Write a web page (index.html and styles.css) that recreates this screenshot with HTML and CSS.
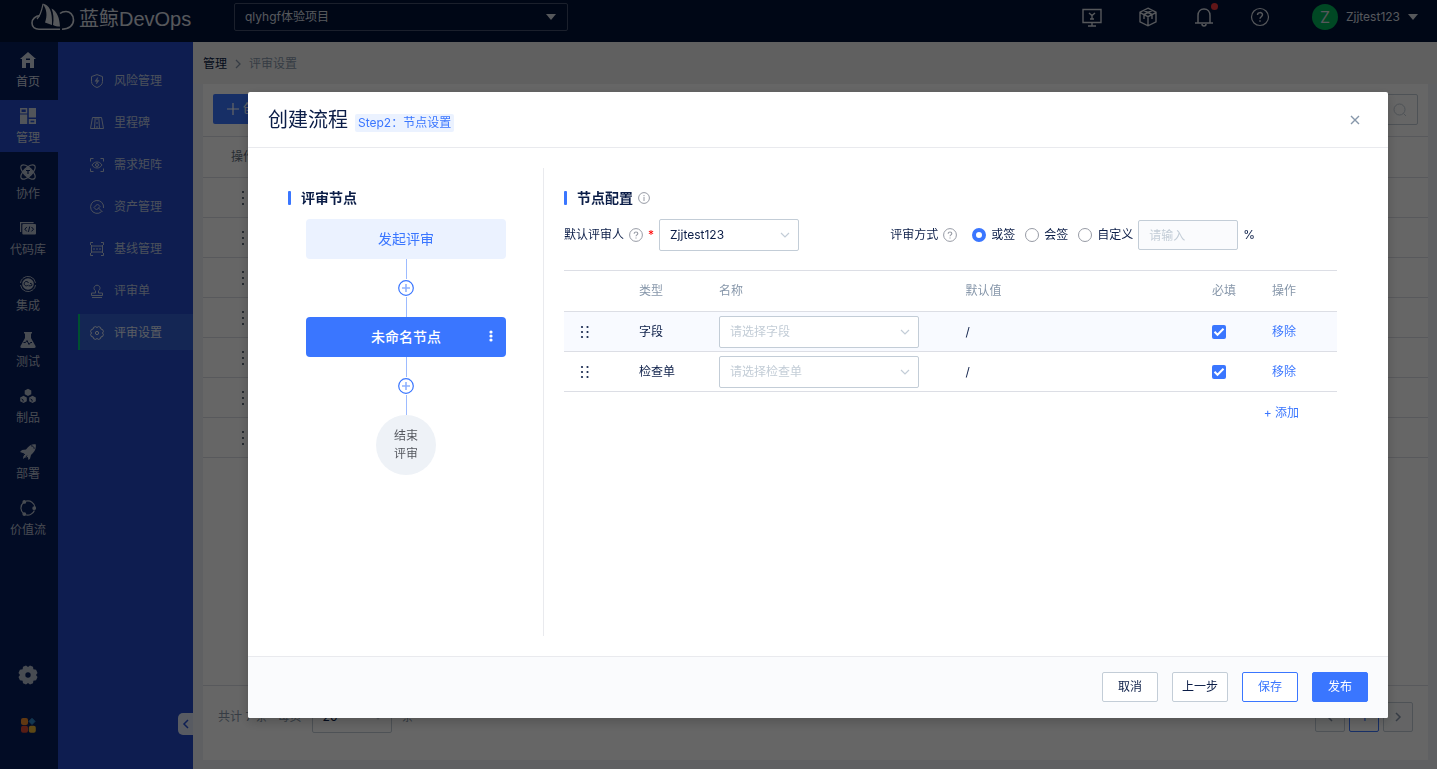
FILE: index.html
```html
<!DOCTYPE html>
<html lang="zh-CN">
<head>
<meta charset="utf-8">
<meta name="viewport" content="width=device-width, initial-scale=1">
<title>蓝鲸DevOps - 评审设置</title>
<link rel="stylesheet" href="styles.css">
</head>
<body>
<svg class="sprite" aria-hidden="true">
  <symbol id="chevron-down" viewBox="0 0 12 12"><path d="M2 4l4 4 4-4" fill="none" stroke="currentColor" stroke-width="1.2"/></symbol>
  <symbol id="help" viewBox="0 0 14 14"><circle cx="7" cy="7" r="6.4" fill="none" stroke="currentColor"/><path d="M5.2 5.7C5.2 3.3 8.8 3.4 8.8 5.6 8.8 6.9 7 6.8 7 8.3M7 9.4v1.2" fill="none" stroke="currentColor" stroke-width="1.1"/></symbol>
  <symbol id="plus-circle" viewBox="0 0 16 16"><circle cx="8" cy="8" r="7.3" fill="#fff" stroke="#3a76ff" stroke-width="1.2"/><path d="M8 4v8M4 8h8" stroke="#8fb2ff" stroke-width="1.6"/></symbol>
  <symbol id="drag" viewBox="0 0 10 14"><g fill="#14264d"><circle cx="2" cy="2" r="1.1"/><circle cx="7.500" cy="2" r="1.100"/><circle cx="2" cy="7" r="1.100"/><circle cx="7.500" cy="7" r="1.100"/><circle cx="2" cy="12" r="1.100"/><circle cx="7.500" cy="12" r="1.100"/></g></symbol>
  <symbol id="dots" viewBox="0 0 4 16"><path d="M1 1h2v2H1zM1 7h2v2H1zM1 13h2v2H1z" fill="currentColor"/></symbol>
</svg>

<header class="topbar">
  <a class="brand" href="#">
    <svg class="brand-mark" viewBox="0 0 44 30" aria-hidden="true">
      <path d="M9 13.500C4.500 14 1 17 1 21c0 4 3 6.200 7 6.200h21M31 27.200c7 0 11.500-3.800 11.500-9.200 0-5.500-4-8.500-7.500-8.500-2.500 0-4.500.7-6 2" fill="none" stroke="currentColor" stroke-width="1.600"/>
      <path d="M12 2c-1 5-2 11-6 15" fill="none" stroke="currentColor" stroke-width="1.200"/>
      <path d="M11.500 1.500c7 1 10 8 9.500 21.500l-7-2.500C16.500 14 16 7 11.500 1.500zM20.500 6.500c6 3 8 10 8.500 18-3 0-5-.5-7-1.500 1-6 .5-12-1.500-16.500z" fill="currentColor"/>
    </svg>
    <span class="brand-name">蓝鲸DevOps</span>
  </a>
  <div class="project">
    <select aria-label="项目"><option>qlyhgf体验项目</option></select>
    <svg viewBox="0 0 10 6" aria-hidden="true"><path d="M0 0h10L5 6z" fill="currentColor"/></svg>
  </div>
  <nav class="tools" aria-label="工具">
    <button type="button" aria-label="控制台"><svg viewBox="0 0 20 20"><path d="M1 2.500h18v13H1zM10 15.500V19M6 19h8M7 6l3 2.500L13 6M10 8.500V12M8 12h4" fill="none" stroke="currentColor" stroke-width="1.400"/></svg></button>
    <button type="button" aria-label="产品"><svg viewBox="0 0 20 20"><path d="M10 1.200l8 4v9.600l-8 4-8-4V5.200zM2 5.700l8 4 8-4M10 9.700v9M6 3.500l8 4M14 3.500l-8 4M6 7.500v4.500M14 7.500v4.500" fill="none" stroke="currentColor" stroke-width="1.400"/></svg></button>
    <button type="button" class="bell" aria-label="通知"><svg viewBox="0 0 20 20"><path d="M1 16h18M4 16V8.500C4 4.500 6.500 2 10 2s6 2.500 6 6.500V16M8 17c0 2.600 4 2.600 4 0" fill="none" stroke="currentColor" stroke-width="1.500"/></svg></button>
    <button type="button" aria-label="帮助"><svg viewBox="0 0 20 20"><circle cx="10" cy="10" r="8.500" fill="none" stroke="currentColor" stroke-width="1.200"/><path d="M7.500 8c0-3.200 5-3.200 5-.2 0 1.800-2.500 2-2.500 4M10 13.200v1.500" fill="none" stroke="currentColor" stroke-width="1.400"/></svg></button>
    <button type="button" class="user"><span class="avatar">Z</span><span>Zjjtest123</span><svg viewBox="0 0 10 6"><path d="M0 0h10L5 6z" fill="currentColor"/></svg></button>
  </nav>
</header>

<div class="shell">
  <nav class="rail" aria-label="主导航">
    <a href="#"><svg viewBox="0 0 16 16"><path d="M8 0l8 7h-2v9H10v-5H6v5H2V7H0zM6 8h4V6.500H6z" fill="currentColor"/></svg>首页</a>
    <a href="#" class="active" aria-current="page"><svg viewBox="0 0 16 16"><path d="M8.800 0H16v9.500H8.800zM0 6.500h7.200V16H0zM8.800 11H16v5H8.800z" fill="currentColor"/><path d="M.8.8h5.700v3.900H.8z" fill="none" stroke="currentColor" stroke-width="1.500"/><path d="M10.500 12.700h3.800v1.600h-3.800z" fill="#234ed2"/></svg>管理</a>
    <a href="#"><svg viewBox="0 0 16 16"><g fill="none" stroke="currentColor" stroke-width="1.200"><ellipse cx="8" cy="8" rx="9.200" ry="4.200" transform="rotate(45 8 8)"/><ellipse cx="8" cy="8" rx="9.200" ry="4.200" transform="rotate(-45 8 8)"/></g><path d="M8 2.500L13.500 8 8 13.500 2.500 8z" fill="currentColor"/><path d="M6 6.500h4M8 6.500V10" stroke="#051e5c" stroke-width="1.200"/></svg>协作</a>
    <a href="#"><svg viewBox="0 0 16 16"><path d="M.6 12V2.600h13" fill="none" stroke="currentColor" stroke-width="1.200"/><rect x="2.300" y="4" width="13.700" height="10.500" rx="1" fill="currentColor"/><path d="M6.800 7L4.800 9.200l2 2.200M11.500 7l2 2.200-2 2.200M9.700 6.500l-1.200 5.400" fill="none" stroke="#051e5c"/></svg>代码库</a>
    <a href="#"><svg viewBox="0 0 16 16"><circle cx="8" cy="8" r="5.800" fill="currentColor"/><path d="M3 2.200A7.600 7.600 0 0 1 15.500 7M13 13.800A7.600 7.600 0 0 1 .5 9M2.600 2.600A7.500 7.500 0 0 0 .5 7M13.400 13.400A7.500 7.500 0 0 0 15.500 9" fill="none" stroke="currentColor" stroke-width=".9"/><path d="M8.300 8.800a2.200 2.200 0 1 1 .2-1.800M8.500 9.800h2.200a1.200 1.200 0 1 0-.7-2.200" fill="none" stroke="#051e5c"/></svg>集成</a>
    <a href="#"><svg viewBox="0 0 16 16"><path d="M4 0h8v1.500h-1V6l4.500 8c.5 1-.2 2-1.200 2H1.700c-1 0-1.700-1-1.200-2L5 6V1.500H4z" fill="currentColor"/><path d="M3.500 10.500h2l1.500-2 2 4 1.500-2H12" fill="none" stroke="#051e5c"/></svg>测试</a>
    <a href="#"><svg viewBox="0 0 16 16"><path d="M8 .8l3.300 1.800v3.600L8 8 4.700 6.200V2.600zM3.500 7.800l3.300 1.800v3.600l-3.300 1.900L.2 13.200V9.600zM12.500 7.800l3.300 1.800v3.600l-3.300 1.900-3.300-1.900V9.600z" fill="currentColor"/><path d="M1.500 11l1.600.9v1.700M10.500 11l1.600.9v1.700" fill="none" stroke="#051e5c" stroke-width=".9"/></svg>制品</a>
    <a href="#"><svg viewBox="0 0 16 16"><path d="M15.700.3C16.500 5 14.500 8 11 11l-1 3.800L8.500 16 7.800 13 5 13.500 3 15l.5-3.500.7-2L0 8l2-2 4-.6C9 1.500 12-.3 15.700.3z" fill="currentColor"/><path d="M11 1.800c2 0 3 1.200 3.200 3M3 12l2-2M6 13l1-1.500" fill="none" stroke="#051e5c" stroke-width=".9"/></svg>部署</a>
    <a href="#"><svg viewBox="0 0 16 16"><path d="M6 1.200A7.200 7.200 0 0 1 15 7.500M14.400 10.500A7 7 0 0 1 5 14.500M3.500 13.500A7.200 7.200 0 0 1 3.500 2.500" fill="none" stroke="currentColor" stroke-width="1.200"/><g fill="currentColor"><circle cx="4.300" cy="1.900" r="1.900"/><circle cx="14.200" cy="8.200" r="1.900"/><circle cx="4.300" cy="14.100" r="1.900"/></g></svg>价值流</a>
    <div class="rail-foot">
      <button type="button" aria-label="设置"><svg viewBox="0 0 20 20"><path d="M8 .5L10 2l2-1.500 3 1.200.4 2.600 2.700.5L19.500 8 18 10l1.500 2-1.400 3.200-2.700.5-.4 2.600-3 1.200-2-1.500-2 1.500-3-1.200-.4-2.600-2.700-.5L.5 12 2 10 .5 8l1.400-3.200 2.700-.5L5 1.700z" fill="currentColor"/><circle cx="10" cy="10" r="2.700" fill="#051e5c"/></svg></button>
      <button type="button" aria-label="应用"><svg class="apps" viewBox="0 0 16 16"><rect x="1" y="1" width="7" height="7" rx="2" fill="#f08c2e"/><path d="M12 1.300L15 4.400 12 7.500 9 4.400z" fill="#2f87c8" stroke="#2f87c8" stroke-linejoin="round"/><rect x="1" y="8.800" width="7" height="7" rx="2" fill="#d94a35"/><rect x="8.800" y="8.800" width="7" height="7" rx="2" fill="#e9b436"/></svg></button>
    </div>
  </nav>

  <nav class="subnav" aria-label="管理">
    <a href="#"><svg viewBox="0 0 14 14"><path d="M7 .6l5.500 2v4.900c0 3-2.500 5-5.500 6-3-1-5.500-3-5.500-6V2.600z"/><path d="M7.700 3.500L5 7.300h2L6.300 10 9 6.500H7z" fill="currentColor" stroke-width=".5"/></svg>风险管理</a>
    <a href="#"><svg viewBox="0 0 14 14"><path d="M2.500 1.500h9l2 11H.5zM5.200 1.500l-.7 11M8.800 1.500l.7 11M7 1.500v2.500M7 6v2M7 10v2.500"/></svg>里程碑</a>
    <a href="#"><svg viewBox="0 0 14 14"><path d="M.5 3.500v-3h3M10.500.5h3v3M13.500 10.500v3h-3M3.500 13.500h-3v-3M2 7c2.500-4 7.500-4 10 0-2.500 4-7.500 4-10 0z"/><circle cx="7" cy="7" r="1.500"/></svg>需求矩阵</a>
    <a href="#"><svg viewBox="0 0 14 14"><path d="M11.500 11.700A6.500 6.500 0 1 1 13.500 8M4 7.500L7.500 4 10 6.500 6.500 10zM8.500 8l4 4"/></svg>资产管理</a>
    <a href="#"><svg viewBox="0 0 14 14"><path d="M.5 3V.5H3M11 .5h2.500V3M.5 11v2.500H3M11 13.500h2.500V11M1.500 3v8M12.500 3v8M1.500 4h11M1.500 10h11M3 7h2M6 7h2M9 7h2"/></svg>基线管理</a>
    <a href="#"><svg viewBox="0 0 14 14"><path d="M5.500 9V6.800a3 3 0 1 1 3 0V9h4v2.500h-11V9zM2 13.500h10"/></svg>评审单</a>
    <a href="#" class="active" aria-current="page"><svg viewBox="0 0 14 14"><path d="M5.500.6L7 1.500 8.500.6l2 .8.400 1.700 1.700.4.800 2L12.500 7l.9 1.500-.8 2-1.700.4-.4 1.700-2 .8-1.500-.9-1.500.9-2-.8-.4-1.700-1.700-.4-.8-2L1.500 7 .6 5.500l.8-2 1.700-.4.400-1.700z"/><circle cx="7" cy="7" r="1.600"/></svg>评审设置</a>
    <button type="button" class="collapse" aria-label="收起"><svg viewBox="0 0 8 10"><path d="M6 1L2 5l4 4" fill="none" stroke="#234ed2" stroke-width="1.500"/></svg></button>
  </nav>

  <main class="content">
    <nav class="crumbs" aria-label="面包屑"><a href="#">管理</a><svg viewBox="0 0 8 10"><path d="M2 1l4 4-4 4" fill="none" stroke="currentColor" stroke-width="1.300"/></svg><span>评审设置</span></nav>
    <section class="card">
      <div class="toolbar">
        <button type="button" class="create"><svg viewBox="0 0 12 12"><path d="M6 0v12M0 6h12" stroke="currentColor" stroke-width="1.200"/></svg>创建</button>
        <div class="search"><input type="text" aria-label="搜索"><svg viewBox="0 0 14 14"><circle cx="6.500" cy="6.500" r="5.500" fill="none" stroke="currentColor"/><path d="M10.500 10.500L13 13" stroke="currentColor"/></svg></div>
      </div>
      <table class="flows">
        <thead><tr><th>操作</th></tr></thead>
        <tbody>
          <tr><td><svg><use href="#dots"/></svg></td></tr>
          <tr><td><svg><use href="#dots"/></svg></td></tr>
          <tr><td><svg><use href="#dots"/></svg></td></tr>
          <tr><td><svg><use href="#dots"/></svg></td></tr>
          <tr><td><svg><use href="#dots"/></svg></td></tr>
          <tr><td><svg><use href="#dots"/></svg></td></tr>
          <tr><td><svg><use href="#dots"/></svg></td></tr>
        </tbody>
      </table>
      <div class="pager">
        <span>共计 7 条</span>
        <label for="page-size">每页</label>
        <div class="select size"><select id="page-size"><option>20</option></select><svg><use href="#chevron-down"/></svg></div>
        <span>条</span>
        <div class="pages">
          <button type="button" aria-label="上一页"><svg viewBox="0 0 8 10"><path d="M6 1L2 5l4 4" fill="none" stroke="currentColor" stroke-width="1.500"/></svg></button>
          <button type="button" class="current">1</button>
          <button type="button" aria-label="下一页"><svg viewBox="0 0 8 10"><path d="M2 1l4 4-4 4" fill="none" stroke="currentColor" stroke-width="1.500"/></svg></button>
        </div>
      </div>
    </section>
  </main>
</div>

<div class="overlay">
  <div class="dialog" role="dialog" aria-modal="true" aria-labelledby="dialog-title">
    <header class="dialog-head">
      <h1 id="dialog-title">创建流程</h1>
      <span class="step">Step2：节点设置</span>
      <button type="button" class="close" aria-label="关闭"><svg viewBox="0 0 12 12"><path d="M2 2l8 8M10 2l-8 8" stroke="currentColor" stroke-width="1.400"/></svg></button>
    </header>
    <div class="dialog-body">
      <section class="nodes">
        <h2>评审节点</h2>
        <div class="flow">
          <button type="button" class="node start">发起评审</button>
          <span class="link"></span>
          <button type="button" class="insert" aria-label="插入节点"><svg><use href="#plus-circle"/></svg></button>
          <span class="link"></span>
          <div class="node current"><span>未命名节点</span><button type="button" aria-label="更多"><svg viewBox="0 0 4 12"><g fill="#fff"><circle cx="2" cy="2" r="1.600"/><circle cx="2" cy="6" r="1.600"/><circle cx="2" cy="10" r="1.600"/></g></svg></button></div>
          <span class="link"></span>
          <button type="button" class="insert" aria-label="插入节点"><svg><use href="#plus-circle"/></svg></button>
          <span class="link"></span>
          <div class="end"><span>结束</span><span>评审</span></div>
        </div>
      </section>
      <section class="config">
        <h2>节点配置<svg viewBox="0 0 12 12"><circle cx="6" cy="6" r="5.400" fill="none" stroke="#979ba5"/><path d="M6 3v1.200M6 5v4" stroke="#979ba5"/></svg></h2>
        <form class="form">
          <div class="reviewer">
            <label for="reviewer">默认评审人</label>
            <svg class="hint"><use href="#help"/></svg>
            <span class="required">*</span>
            <div class="select"><select id="reviewer"><option>Zjjtest123</option></select><svg><use href="#chevron-down"/></svg></div>
          </div>
          <div class="mode" role="radiogroup" aria-labelledby="mode-label">
            <span id="mode-label">评审方式</span>
            <svg class="hint"><use href="#help"/></svg>
            <div class="radios">
              <label><input type="radio" name="mode" checked>或签</label>
              <label><input type="radio" name="mode">会签</label>
              <label><input type="radio" name="mode">自定义</label>
            </div>
            <input class="percent" type="text" placeholder="请输入" aria-label="自定义百分比" disabled>
            <span>%</span>
          </div>
        </form>
        <table class="fields">
          <colgroup><col class="c-drag"><col class="c-type"><col><col><col class="c-need"><col class="c-op"></colgroup>
          <thead><tr><th></th><th>类型</th><th>名称</th><th>默认值</th><th>必填</th><th>操作</th></tr></thead>
          <tbody>
            <tr class="hover"><td class="drag"><svg><use href="#drag"/></svg></td><td>字段</td><td><div class="select empty"><select aria-label="字段名称"><option>请选择字段</option></select><svg><use href="#chevron-down"/></svg></div></td><td>/</td><td><input type="checkbox" aria-label="字段必填" checked></td><td><a href="#">移除</a></td></tr>
            <tr><td class="drag"><svg><use href="#drag"/></svg></td><td>检查单</td><td><div class="select empty"><select aria-label="检查单名称"><option>请选择检查单</option></select><svg><use href="#chevron-down"/></svg></div></td><td>/</td><td><input type="checkbox" aria-label="检查单必填" checked></td><td><a href="#">移除</a></td></tr>
          </tbody>
        </table>
        <button type="button" class="add">+ 添加</button>
      </section>
    </div>
    <footer class="dialog-foot">
      <button type="button">取消</button>
      <button type="button">上一步</button>
      <button type="button" class="outline">保存</button>
      <button type="button" class="primary">发布</button>
    </footer>
  </div>
</div>
</body>
</html>
```

FILE: styles.css
```css
* { box-sizing: border-box; }
html, body { height: 100%; }
body {
  margin: 0;
  display: flex;
  flex-direction: column;
  overflow: hidden;
  font: 12px/18px Inter, "Noto Sans CJK SC", sans-serif;
  color: #0b1d47;
}
button, input, select { font: inherit; color: inherit; margin: 0; }
button { padding: 0; border: 0; background: none; cursor: pointer; }
a { color: inherit; text-decoration: none; }
svg { flex: none; display: block; }
table { border-collapse: collapse; width: 100%; table-layout: fixed; }
th { font-weight: 400; text-align: left; }
th, td { padding: 0; }
select { appearance: none; border: 0; background: none; width: 100%; height: 100%; outline: 0; }
.sprite { display: none; }

/* Top bar */
.topbar {
  flex: none;
  height: 42px;
  padding: 0 19px 8px 31px;
  display: flex;
  align-items: center;
  background: #021338;
  color: #d6dbe4;
}
.brand { display: flex; align-items: center; gap: 4px; width: 203px; }
.brand-mark { width: 44px; height: 30px; }
.brand-name { padding-top: 4px; font: 20px/30px "Liberation Sans", "Noto Sans CJK SC", sans-serif; white-space: nowrap; }
.project { position: relative; width: 334px; height: 28px; border: 1px solid #44516e; border-radius: 2px; }
.project select { padding: 0 10px; }
.project svg { position: absolute; right: 11px; top: 10px; width: 10px; height: 6px; pointer-events: none; }
.tools { margin-left: auto; display: flex; align-items: center; gap: 36px; }
.tools > button > svg { width: 20px; height: 20px; }
.bell { position: relative; }
.bell::after { content: ""; position: absolute; right: -4px; top: -4px; width: 7px; height: 7px; border-radius: 50%; background: #f2383c; }
.tools .user { display: flex; align-items: center; gap: 8px; margin-left: 6px; }
.avatar { width: 26px; height: 26px; border-radius: 50%; background: #00b45a; font-size: 16px; line-height: 26px; }
.tools .user svg { width: 10px; height: 6px; }

/* Side navigation */
.shell { flex: 1; min-height: 0; display: flex; }
.rail { width: 58px; flex: none; padding-top: 2px; display: flex; flex-direction: column; gap: 4px; background: #051e5c; color: #b4bdcd; }
.rail > a { height: 52px; padding: 8px 2px 5px 0; display: flex; flex-direction: column; align-items: center; justify-content: space-between; }
.rail > a svg { width: 16px; height: 16px; }
.rail > a:first-child, .rail > .active { color: #ced5e2; }
.rail > .active { background: #234ac8; }
.rail-foot { margin-top: auto; padding: 0 2px 34px 0; display: flex; flex-direction: column; align-items: center; gap: 30px; }
.rail-foot svg { width: 20px; height: 20px; }
.rail-foot .apps { width: 16px; height: 20px; }
.subnav { position: relative; width: 135px; flex: none; padding: 20px 0 0 20px; display: flex; flex-direction: column; gap: 6px; background: #234ac8; color: #bcc7e2; }
.subnav a { height: 36px; padding: 1px 0 0 10px; border-left: 2px solid transparent; display: flex; align-items: center; gap: 10px; }
.subnav a svg { width: 14px; height: 14px; fill: none; stroke: currentColor; }
.subnav .active { background: #3360d2; border-color: #00c878; color: #e2e8f5; }
.collapse { position: absolute; right: 0; bottom: 34px; width: 15px; height: 22px; border-radius: 5px 0 0 5px; background: #dce4f5; display: grid; place-items: center; }
.collapse svg { width: 8px; height: 10px; }

/* Page under the dialog */
.content { flex: 1; min-width: 0; display: flex; flex-direction: column; background: #edf1f5; }
.crumbs { flex: none; height: 42px; padding: 2px 0 0 10px; display: flex; align-items: center; gap: 7px; background: #f0f0f0; color: #8797aa; }
.crumbs a { color: #0b1d47; }
.crumbs svg { width: 8px; height: 10px; }
.card { flex: 1; margin: 0 9px 9px 10px; display: flex; flex-direction: column; background: #fff; }
.toolbar { padding: 10px 10px 11px; display: flex; justify-content: space-between; }
.create { height: 30px; padding: 0 14px; display: flex; align-items: center; gap: 4px; border-radius: 2px; background: #3a76ff; color: #fff; }
.create svg { width: 12px; height: 12px; }
.search { position: relative; width: 240px; height: 31px; }
.search input { width: 100%; height: 100%; border: 1px solid #c3cdd7; border-radius: 2px; }
.search svg { position: absolute; right: 11px; top: 9px; width: 14px; height: 14px; color: #c3cdd7; }
.flows { border-top: 1px solid #dcdee5; color: #63707e; }
.flows tr { height: 40px; border-bottom: 1px solid #dcdee5; }
.flows thead tr { height: 41px; }
.flows th, .flows td { padding-left: 28px; }
.flows td svg { width: 4px; height: 16px; margin-left: 10px; }
.pager { margin-top: auto; height: 75px; padding: 0 15px 13px; border-top: 1px solid #dcdee5; display: flex; align-items: center; gap: 10px; color: #8797aa; }
.pager .size { width: 80px; color: #0b1d47; }
.pages { margin-left: auto; display: flex; gap: 4px; }
.pages button { width: 30px; height: 30px; border: 1px solid #c3cdd7; border-radius: 2px; background: #fafbfd; display: grid; place-items: center; }
.pages .current { border-color: #3a76ff; color: #3a76ff; background: #fff; }
.pages svg { width: 8px; height: 10px; }

/* Shared select */
.select { position: relative; width: 140px; height: 32px; border: 1px solid #c3cdd7; border-radius: 2px; background: #fff; }
.select select { padding: 0 24px 0 10px; }
.select svg { position: absolute; right: 7px; top: 9px; width: 12px; height: 12px; color: #c3cdd7; pointer-events: none; }

/* Dialog */
.overlay { position: fixed; inset: 0; padding: 92px 49px 51px 248px; display: flex; background: rgba(0, 0, 0, .6); }
.dialog { flex: 1; min-width: 0; display: flex; flex-direction: column; background: #fff; border-radius: 2px; box-shadow: 0 4px 12px rgba(0, 0, 0, .2); }
.dialog-head { flex: none; height: 56px; padding: 0 27px 0 20px; display: flex; align-items: center; gap: 7px; border-bottom: 1px solid #e9eaee; }
h1 { margin: 0; font-size: 20px; line-height: 28px; font-weight: 400; }
.step { margin-top: 6px; padding: 0 3px; border-radius: 2px; background: #ebf2ff; color: #3a76ff; }
.close { margin-left: auto; color: #8797aa; }
.close svg { width: 12px; height: 12px; }
.dialog-body { flex: 1; min-height: 0; padding: 20px; display: flex; }
h2 { margin: 0 0 11px; display: flex; align-items: center; font-size: 14px; line-height: 20px; font-weight: 700; }
h2::before { content: ""; width: 3px; height: 14px; margin-right: 10px; border-radius: 1px; background: #3a76ff; }
h2 svg { width: 12px; height: 12px; margin-left: 5px; }
.nodes { width: 276px; flex: none; padding: 20px 0 0 20px; border-right: 1px solid #e9eaee; }
.flow { width: 200px; margin-left: 18px; display: flex; flex-direction: column; align-items: center; }
.node { width: 100%; height: 40px; border-radius: 4px; display: flex; align-items: center; justify-content: center; font-size: 14px; }
.node.start { background: #ebf2ff; color: #3a76ff; }
.node.current { position: relative; background: #3a76ff; color: #fff; font-weight: 500; }
.node.current button { position: absolute; right: 13px; top: 13px; }
.node.current svg { width: 4px; height: 12px; }
.link { width: 1px; height: 20px; background: #9dbbff; }
.insert { padding: 1px; }
.insert svg { width: 16px; height: 16px; }
.end { width: 60px; height: 60px; border-radius: 50%; background: #eef2f7; color: #55585f; display: flex; flex-direction: column; align-items: center; justify-content: center; }
.config { flex: 1; min-width: 0; padding: 20px 31px 0 20px; display: flex; flex-direction: column; }
.form { display: flex; align-items: center; justify-content: space-between; padding-right: 82px; margin-bottom: 19px; }
.reviewer, .mode { display: flex; align-items: center; gap: 5px; }
.hint { width: 14px; height: 14px; color: #979ba5; }
.required { color: #f00; font-size: 12px; }
.radios { display: flex; gap: 10px; margin-left: 10px; }
.radios label { display: flex; align-items: center; gap: 5px; }
.radios input { appearance: none; width: 14px; height: 14px; border: 1px solid #979ba5; border-radius: 50%; background: #fff; }
.radios input:checked { border: 4px solid #3a76ff; }
.percent { width: 100px; height: 30px; padding: 0 10px; border: 1px solid #c3cdd7; border-radius: 2px; background: #fafbfd; }
.percent::placeholder { color: #c3cdd7; }
.fields { border-top: 1px solid #dcdee5; }
.fields th { height: 41px; color: #8797aa; }
.fields td { height: 40px; }
.fields tr { border-bottom: 1px solid #dcdee5; }
.fields .hover { background: #f8faff; }
.c-drag { width: 75px; }
.c-type { width: 80px; }
.c-need { width: 60px; }
.c-op { width: 65px; }
.drag { padding-left: 16px; }
.drag svg { width: 10px; height: 14px; }
.fields .select { width: 200px; }
.empty select { color: #c3cdd7; }
.fields a, .add { color: #3a76ff; }
.fields input {
  appearance: none; display: block; width: 14px; height: 14px; border-radius: 2px;
  background: #3a76ff url("data:image/svg+xml,%3Csvg xmlns='http://www.w3.org/2000/svg' viewBox='0 0 14 14'%3E%3Cpath d='M2.500 6.800l3 3 6-6' fill='none' stroke='%23fff' stroke-width='2'/%3E%3C/svg%3E");
}
.add { align-self: flex-end; margin: 12px 38px 0 0; }
.dialog-foot { flex: none; height: 62px; padding: 0 20px 2px; display: flex; align-items: center; justify-content: flex-end; gap: 14px; border-top: 1px solid #e9eaee; background: #fafbfd; border-radius: 0 0 2px 2px; }
.dialog-foot button { width: 56px; height: 30px; border: 1px solid #c3cdd7; border-radius: 2px; background: #fff; }
.dialog-foot .outline { border-color: #3a76ff; color: #3a76ff; }
.dialog-foot .primary { border-color: #3a76ff; background: #3a76ff; color: #fff; }
```
